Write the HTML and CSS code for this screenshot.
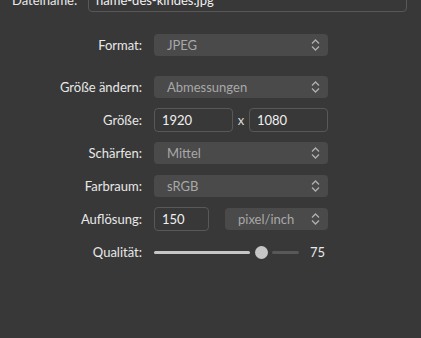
FILE: index.html
```html
<!DOCTYPE html>
<html lang="de">
<head>
	<meta charset="UTF-8">
	<title>Exportieren</title>
	<link rel="stylesheet" href="styles.css">
</head>
<body>
<div class="panel">
	<div class="file-row">
		<label class="file-label">Dateiname:</label>
		<div class="field file-field">name-des-kindes.jpg</div>
	</div>

	<div class="row format-row">
		<label class="label">Format:</label>
		<div class="select wide"><span>JPEG</span><svg class="chev" width="9" height="12" viewBox="0 0 9 12"><path d="M1 4.5 L4.5 1 L8 4.5 M1 7.5 L4.5 11 L8 7.5" /></svg></div>
	</div>

	<div class="row">
		<label class="label">Größe ändern:</label>
		<div class="select wide"><span>Abmessungen</span><svg class="chev" width="9" height="12" viewBox="0 0 9 12"><path d="M1 4.5 L4.5 1 L8 4.5 M1 7.5 L4.5 11 L8 7.5" /></svg></div>
	</div>

	<div class="row">
		<label class="label">Größe:</label>
		<div class="field size">1920</div>
		<span class="times">x</span>
		<div class="field size">1080</div>
	</div>

	<div class="row">
		<label class="label">Schärfen:</label>
		<div class="select wide"><span>Mittel</span><svg class="chev" width="9" height="12" viewBox="0 0 9 12"><path d="M1 4.5 L4.5 1 L8 4.5 M1 7.5 L4.5 11 L8 7.5" /></svg></div>
	</div>

	<div class="row">
		<label class="label">Farbraum:</label>
		<div class="select wide"><span>sRGB</span><svg class="chev" width="9" height="12" viewBox="0 0 9 12"><path d="M1 4.5 L4.5 1 L8 4.5 M1 7.5 L4.5 11 L8 7.5" /></svg></div>
	</div>

	<div class="row">
		<label class="label">Auflösung:</label>
		<div class="field dpi">150</div>
		<div class="select unit"><span>pixel/inch</span><svg class="chev" width="9" height="12" viewBox="0 0 9 12"><path d="M1 4.5 L4.5 1 L8 4.5 M1 7.5 L4.5 11 L8 7.5" /></svg></div>
	</div>

	<div class="row">
		<label class="label">Qualität:</label>
		<div class="slider">
			<div class="track-fill"></div>
			<div class="thumb"></div>
			<div class="track-rest"></div>
		</div>
		<span class="value">75</span>
	</div>
</div>
</body>
</html>
```

FILE: styles.css
```css
body{
	margin: 0;
	background-color: #383838;
	color: #e8e8e8;
	font-family: Lato, "Noto Sans", sans-serif;
	font-size: 13px;
	overflow: hidden;
}
.panel{
	display: flex;
	flex-direction: column;
}

/* Dateiname (oben abgeschnitten) */
.file-row{
	display: flex;
	align-items: center;
	gap: 12px;
	height: 24px;
	margin-top: -12px;
	padding-left: 12px;
}
.file-label{
	width: 64px;
	text-align: right;
}
.file-field{
	width: 319px;
}

.row{
	display: flex;
	align-items: center;
	height: 24px;
	margin-top: 9px;
}
.format-row{
	margin-top: 21px;
	margin-bottom: 9px;
}
.label{
	width: 142px;
	margin-right: 12px;
	text-align: right;
}

.field{
	box-sizing: border-box;
	height: 24px;
	line-height: 22px;
	padding: 0 7px;
	border: 1px solid #585858;
	border-radius: 4px;
	color: #f0f0f0;
}
.size{
	width: 79px;
}
.times{
	width: 16px;
	text-align: center;
	color: #dcdcdc;
}
.dpi{
	width: 55px;
	margin-right: 16px;
}

.select{
	box-sizing: border-box;
	height: 22px;
	display: flex;
	align-items: center;
	justify-content: space-between;
	padding: 0 8px 0 13px;
	background-color: #4a4a4a;
	border-radius: 4px;
	color: #a8a8a8;
}
.wide{
	width: 174px;
}
.unit{
	width: 103px;
	padding-left: 13px;
}
.chev{
	fill: none;
	stroke: #b0b0b0;
	stroke-width: 1.3;
}

/* Qualität-Regler */
.slider{
	display: flex;
	align-items: center;
	width: 145px;
}
.track-fill{
	width: 96px;
	height: 3px;
	border-radius: 2px;
	background-color: #c6c6c6;
}
.thumb{
	width: 13px;
	height: 13px;
	margin: 0 4px 0 5px;
	border-radius: 50%;
	background-color: #c6c6c6;
}
.track-rest{
	width: 27px;
	height: 3px;
	border-radius: 2px;
	background-color: #585858;
}
.value{
	margin-left: 11px;
	color: #e8e8e8;
}
```
